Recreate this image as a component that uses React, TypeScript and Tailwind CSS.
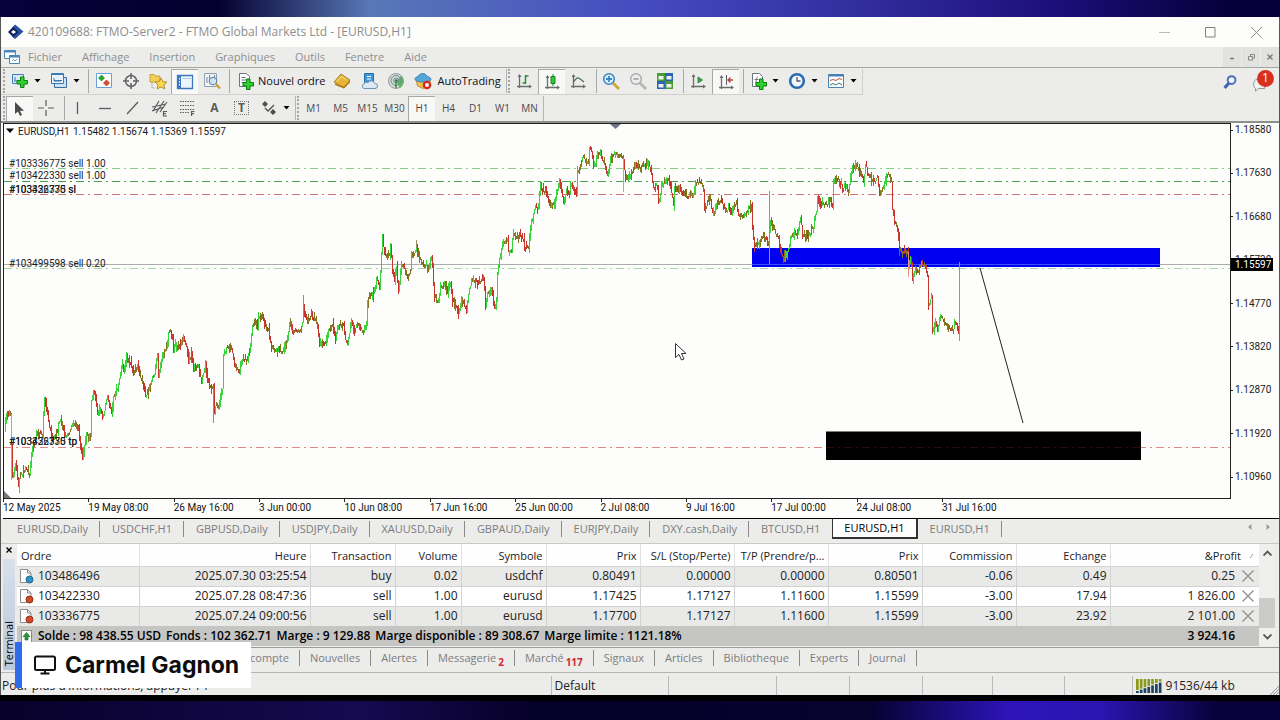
import type { ReactNode } from 'react'
import { clsx } from 'clsx'

interface Order {
  id: string
  time: string
  side: 'buy' | 'sell'
  volume: string
  symbol: string
  open: string
  sl: string
  tp: string
  price: string
  commission: string
  swap: string
  profit: string
}

const orders: Order[] = [
  {
    id: '103486496',
    time: '2025.07.30 03:25:54',
    side: 'buy',
    volume: '0.02',
    symbol: 'usdchf',
    open: '0.80491',
    sl: '0.00000',
    tp: '0.00000',
    price: '0.80501',
    commission: '-0.06',
    swap: '0.49',
    profit: '0.25',
  },
  {
    id: '103422330',
    time: '2025.07.28 08:47:36',
    side: 'sell',
    volume: '1.00',
    symbol: 'eurusd',
    open: '1.17425',
    sl: '1.17127',
    tp: '1.11600',
    price: '1.15599',
    commission: '-3.00',
    swap: '17.94',
    profit: '1 826.00',
  },
  {
    id: '103336775',
    time: '2025.07.24 09:00:56',
    side: 'sell',
    volume: '1.00',
    symbol: 'eurusd',
    open: '1.17700',
    sl: '1.17127',
    tp: '1.11600',
    price: '1.15599',
    commission: '-3.00',
    swap: '23.92',
    profit: '2 101.00',
  },
]

const columns = [
  { label: 'Ordre', width: 'w-[122px]' },
  { label: 'Heure', width: 'w-[171px]' },
  { label: 'Transaction', width: 'w-[85px]' },
  { label: 'Volume', width: 'w-[66px]' },
  { label: 'Symbole', width: 'w-[85px]' },
  { label: 'Prix', width: 'w-[94px]' },
  { label: 'S/L (Stop/Perte)', width: 'w-[94px]' },
  { label: 'T/P (Prendre/p...', width: 'w-[94px]' },
  { label: 'Prix', width: 'w-[94px]' },
  { label: 'Commission', width: 'w-[94px]' },
  { label: 'Echange', width: 'w-[94px]' },
]

const menus = ['Fichier', 'Affichage', 'Insertion', 'Graphiques', 'Outils', 'Fenetre', 'Aide']
const timeframes = ['M1', 'M5', 'M15', 'M30', 'H1', 'H4', 'D1', 'W1', 'MN']

const chartTabs = [
  'EURUSD,Daily',
  'USDCHF,H1',
  'GBPUSD,Daily',
  'USDJPY,Daily',
  'XAUUSD,Daily',
  'GBPAUD,Daily',
  'EURJPY,Daily',
  'DXY.cash,Daily',
  'BTCUSD,H1',
  'EURUSD,H1',
  'EURUSD,H1',
]
const activeTab = 9

const terminalTabs: { label: string; count?: number }[] = [
  { label: 'Nouvelles' },
  { label: 'Alertes' },
  { label: 'Messagerie', count: 2 },
  { label: 'Marché', count: 117 },
  { label: 'Signaux' },
  { label: 'Articles' },
  { label: 'Bibliotheque' },
  { label: 'Experts' },
  { label: 'Journal' },
]

const priceLabels = [
  '1.18580',
  '1.17630',
  '1.16680',
  '1.15730',
  '1.14770',
  '1.13820',
  '1.12870',
  '1.11920',
  '1.10960',
]

const timeLabels = [
  '12 May 2025',
  '19 May 08:00',
  '26 May 16:00',
  '3 Jun 00:00',
  '10 Jun 08:00',
  '17 Jun 16:00',
  '25 Jun 00:00',
  '2 Jul 08:00',
  '9 Jul 16:00',
  '17 Jul 00:00',
  '24 Jul 08:00',
  '31 Jul 16:00',
]

// x,y pairs of the swings in the EURUSD series
const swings = [
  4, 432, 6, 413, 10, 414, 12, 477, 15, 462, 18, 487, 19, 478, 25, 468, 29, 473, 32, 447, 37, 433, 42, 435,
  44, 400, 47, 415, 51, 435, 52, 442, 57, 430, 59, 420, 63, 427, 64, 438, 68, 435, 71, 427, 74, 423, 78, 430,
  80, 447, 82, 457, 83, 452, 86, 432, 88, 438, 90, 435, 91, 400, 93, 390, 95, 398, 97, 412, 100, 410, 102, 417,
  107, 398, 111, 412, 113, 397, 117, 388, 119, 377, 122, 363, 123, 373, 126, 359, 129, 360, 133, 373, 137, 365,
  139, 377, 143, 385, 145, 397, 148, 390, 152, 378, 154, 373, 157, 357, 158, 378, 160, 363, 163, 353, 166, 347,
  168, 332, 170, 332, 173, 347, 177, 345, 181, 343, 183, 337, 186, 347, 188, 362, 191, 353, 193, 370, 198, 365,
  201, 381, 205, 367, 208, 385, 213, 388, 214, 412, 215, 405, 218, 407, 222, 388, 223, 357, 226, 347, 231, 347,
  233, 360, 237, 370, 239, 371, 242, 358, 245, 362, 249, 353, 252, 325, 254, 323, 257, 327, 258, 318, 262, 315,
  265, 327, 268, 330, 271, 347, 275, 352, 278, 348, 282, 353, 286, 342, 289, 325, 293, 330, 298, 332, 302, 325,
  303, 308, 305, 317, 307, 320, 311, 313, 313, 318, 317, 325, 319, 343, 322, 342, 325, 342, 328, 330, 332, 323,
  335, 340, 338, 327, 343, 327, 345, 338, 347, 343, 351, 322, 354, 330, 358, 325, 363, 332, 366, 322, 367, 300,
  370, 297, 373, 293, 376, 280, 379, 285, 381, 257, 382, 238, 384, 253, 386, 258, 389, 252, 390, 245, 392, 270,
  394, 280, 396, 267, 398, 293, 401, 263, 403, 268, 407, 278, 410, 270, 411, 257, 414, 253, 416, 245, 417, 253,
  421, 263, 425, 267, 429, 265, 431, 257, 432, 270, 434, 297, 437, 301, 440, 288, 444, 285, 447, 292, 450, 281,
  452, 300, 454, 302, 458, 312, 461, 302, 466, 310, 468, 293, 471, 282, 475, 280, 479, 283, 483, 276, 485, 306,
  487, 293, 491, 287, 494, 309, 496, 300, 497, 270, 500, 253, 503, 243, 507, 238, 508, 251, 511, 249, 513, 232,
  515, 238, 519, 235, 523, 238, 524, 247, 528, 247, 530, 227, 532, 218, 535, 208, 538, 208, 540, 187, 543, 193,
  545, 187, 549, 205, 552, 203, 553, 206, 556, 193, 559, 181, 563, 201, 566, 190, 569, 192, 571, 184, 576, 192,
  577, 172, 580, 163, 583, 157, 586, 163, 588, 163, 589, 146, 591, 152, 593, 168, 597, 155, 600, 153, 603, 162,
  607, 174, 610, 158, 615, 153, 618, 157, 621, 155, 623, 160, 625, 178, 628, 178, 632, 170, 635, 165, 640, 166,
  647, 164, 650, 168, 653, 187, 657, 187, 658, 204, 661, 187, 665, 180, 668, 178, 671, 192, 673, 204, 674, 190,
  678, 190, 683, 193, 688, 197, 693, 193, 695, 182, 700, 183, 703, 188, 704, 211, 707, 203, 710, 200, 712, 213,
  715, 210, 719, 200, 723, 207, 726, 212, 728, 205, 731, 216, 733, 207, 736, 205, 738, 216, 743, 216, 748, 207,
  751, 208, 752, 227, 754, 246, 758, 243, 763, 235, 768, 243, 770, 222, 773, 230, 778, 237, 780, 253, 783, 259,
  787, 253, 790, 238, 793, 235, 797, 230, 800, 217, 802, 235, 808, 237, 813, 225, 816, 212, 817, 198, 819, 203,
  823, 203, 827, 206, 830, 198, 832, 207, 833, 182, 834, 177, 838, 180, 842, 187, 845, 185, 848, 192, 850, 177,
  852, 168, 855, 165, 858, 167, 863, 182, 865, 165, 868, 175, 873, 182, 877, 177, 879, 194, 883, 187, 886, 177,
  888, 173, 891, 182, 892, 208, 894, 220, 897, 228, 899, 250, 903, 252, 907, 250, 908, 268, 910, 257, 912, 279,
  915, 268, 918, 270, 921, 262, 925, 267, 927, 277, 928, 307, 930, 300, 931, 296, 932, 332, 935, 322, 937, 328,
  940, 315, 944, 320, 947, 328, 952, 330, 956, 322, 958, 333, 959, 338,
]

const noise = (n: number) => {
  const v = Math.sin(n * 127.1 + 11.7) * 43758.5453
  return v - Math.floor(v)
}

// One 1px bar per pixel column, split by colour into three paths
function buildBars() {
  const paths = { up: '', down: '', mixed: '' }
  let s = 0
  let prev = swings[1]
  for (let x = 5; x < 960; x++) {
    while (s + 4 < swings.length && swings[s + 2] < x) s += 2
    const [x0, y0, x1, y1] = swings.slice(s, s + 4)
    const trend = (y1 - y0) / (x1 - x0)
    const close = y0 + trend * (x - x0) + (noise(x) - 0.5) * 4
    const top = Math.round(Math.min(prev, close) - noise(x + 2000) ** 2 * 6)
    const bottom = Math.round(Math.max(prev, close) + noise(x + 4000) ** 2 * 6)
    const d = `M${x + 0.5} ${top}V${Math.max(bottom, top + 3)}`
    const pick = noise(x + 7000)
    if (Math.abs(trend) > 3) paths[trend < 0 ? 'up' : 'down'] += d
    else if (pick < 0.6) paths.mixed += d
    else if (pick < 0.85) paths[trend < 0 ? 'up' : 'down'] += d
    else paths[close < prev ? 'up' : 'down'] += d
    prev = close
  }
  return paths
}

const bars = buildBars()

function Icon({ children, size = 'size-[18px]' }: { children: ReactNode; size?: string }) {
  return (
    <svg viewBox="0 0 18 18" className={clsx(size, 'shrink-0')} fill="none" aria-hidden="true">
      {children}
    </svg>
  )
}

function Tool({ label, pressed, children }: { label: string; pressed?: boolean; children: ReactNode }) {
  return (
    <button
      aria-label={label}
      className={clsx(
        'flex h-[25px] w-[27px] items-center justify-center',
        pressed && 'border-t border-l border-[#a8a8a8] bg-[#f8f8f7]',
      )}
    >
      {children}
    </button>
  )
}

function Caret({ label }: { label: string }) {
  return (
    <button aria-label={label} className="flex h-[25px] w-3 items-center justify-center pr-1">
      <svg viewBox="0 0 7 4" className="h-1 w-[7px] shrink-0" aria-hidden="true">
        <path d="M0.5 0h6L3.5 3.5z" fill="#000" />
      </svg>
    </button>
  )
}

const Separator = () => <span className="mr-px ml-1 h-6 w-px bg-[#a9a9a9]" />
const Handle = () => <span className="mx-px h-6 border-l-2 border-dotted border-[#a5a5a5]" />

const Plus = ({ x = 7, y = 6 }: { x?: number; y?: number }) => (
  <path
    d={`M${x + 3.5} ${y}h3.5v3.5h3.5v3.5h-3.5v3.5h-3.5v-3.5h-3.5v-3.5h3.5z`}
    fill="#2fd02b"
    stroke="#0b7d12"
    strokeWidth="1"
  />
)

const Axes = ({ children }: { children: ReactNode }) => (
  <Icon>
    <path d="M4.500 3v13M2 14.500h13" stroke="#6a6f6c" strokeWidth="1.300" />
    <path d="M2.500 5l2-3 2 3zM14 12.500l3 2-3 2z" fill="#6a6f6c" />
    {children}
  </Icon>
)

const Page = () => <path d="M3.500 1.500h7l3 3v10h-10z" fill="#fff" stroke="#6d7680" />

function TitleBar() {
  return (
    <header className="flex h-[30px] items-center bg-[#fdfdfc] pl-[7px]">
      <svg viewBox="0 0 16 16" className="size-4" aria-hidden="true">
        <path d="M7 0.500l8.500 7L7 15l-3-2.500L9.500 8 4 3.500z" fill="#2a50a4" />
        <path d="M5 3l5.500 5L5 13 0 8z" fill="#0e2359" />
        <path d="M5.500 6l2.500 2-2.500 2L3 8z" fill="#fff" />
      </svg>
      <h1 className="ml-1 text-xs text-[#8e8e8e]">420109688: FTMO-Server2 - FTMO Global Markets Ltd - [EURUSD,H1]</h1>
      <div className="ml-auto flex">
        <button aria-label="Réduire" className="flex h-[30px] w-[46px] items-center justify-center">
          <svg viewBox="0 0 11 11" className="size-[11px]" stroke="#bcbcbc"><path d="M0 5.500h11" /></svg>
        </button>
        <button aria-label="Agrandir" className="flex h-[30px] w-[46px] items-center justify-center">
          <svg viewBox="0 0 11 11" className="size-[11px]" fill="none" stroke="#808080"><path d="M0.500 0.500h9.500v9.500h-9.500z" /></svg>
        </button>
        <button aria-label="Fermer" className="flex h-[30px] w-[46px] items-center justify-center">
          <svg viewBox="0 0 11 11" className="size-[11px]" stroke="#8c8c8c"><path d="M0 0l11 11M11 0L0 11" /></svg>
        </button>
      </div>
    </header>
  )
}

function MenuBar() {
  return (
    <nav className="flex h-[21px] items-center border-b border-[#a4a6a4] pl-[3px]">
      <svg viewBox="0 0 16 16" className="size-4" fill="#fff" stroke="#4a86b8" aria-hidden="true">
        <path d="M0.500 1.500h11v8h-11z" />
        <path d="M0.500 2.500h11" strokeWidth="2" />
        <path d="M5.500 6.500h10v8h-10z" />
        <path d="M5.500 7.500h10" strokeWidth="2" />
        <path d="M8 12l1.500-1.500 1.500 1.500 2-2" fill="none" strokeWidth="0.800" />
      </svg>
      <div className="ml-2 flex gap-5">
        {menus.map((m) => (
          <button key={m} className="text-[11px] text-[#8e8e8e]">{m}</button>
        ))}
      </div>
      <div className="ml-auto flex gap-px">
        <button aria-label="Réduire le graphique" className="flex h-5 w-[18px] items-center justify-center bg-[#e2e2e1]">
          <svg viewBox="0 0 6 6" className="size-[6px]" stroke="#777"><path d="M1 4.500h4" strokeWidth="1.500" /></svg>
        </button>
        <button aria-label="Restaurer le graphique" className="flex h-5 w-[18px] items-center justify-center bg-[#e2e2e1]">
          <svg viewBox="0 0 7 7" className="size-[7px]" fill="none" stroke="#888"><path d="M2.500 2V0.500h4v3.500H5M0.500 2.500h4v3.500h-4z" /></svg>
        </button>
        <button aria-label="Fermer le graphique" className="flex h-5 w-[18px] items-center justify-center bg-[#e2e2e1]">
          <svg viewBox="0 0 6 6" className="size-[6px]" stroke="#777"><path d="M0.500 0.500l5 5M5.500 0.500l-5 5" strokeWidth="1.300" /></svg>
        </button>
      </div>
    </nav>
  )
}

function StandardToolbar() {
  return (
    <div className="flex h-[27px] items-center">
      <div className="flex items-center border-r border-b border-[#cfcfce] pl-px">
        <Handle />
        <Tool label="Nouveau graphique">
          <Icon>
            <path d="M1.500 2.500h11v9h-11z" fill="#dcebf7" stroke="#3f7fb5" />
            <path d="M4 5v4M3 9h6" stroke="#3f7fb5" />
            <Plus x={6} y={5} />
          </Icon>
        </Tool>
        <Caret label="Liste des graphiques" />
        <Tool label="Profils">
          <Icon>
            <path d="M4.500 5.500h12v10h-12z" fill="#cfe1f1" stroke="#3a6fa3" />
            <path d="M1.500 1.500h12v10h-12z" fill="#e9f2fa" stroke="#3a7ab5" />
            <path d="M1.500 2.500h12M4 6v3h7M4 8.500h8" stroke="#3a7ab5" />
          </Icon>
        </Tool>
        <Caret label="Liste des profils" />
        <Separator />
        <Tool label="Fenêtre du marché">
          <Icon>
            <path d="M1.500 1.500h15v14h-15z" fill="#fff" stroke="#6aa0d8" />
            <path d="M6.500 3l3 3-3 3-3-3z" fill="#2aa82a" stroke="#157a1a" strokeWidth="0.600" />
            <path d="M11.500 8l3 3-3 3-3-3z" fill="#e04a2c" stroke="#a82a14" strokeWidth="0.600" />
          </Icon>
        </Tool>
        <Tool label="Fenêtre des données">
          <Icon>
            <circle cx="9" cy="9" r="5.500" stroke="#5f6363" strokeWidth="1.500" />
            <path d="M9 1v6M9 11v6M1 9h6M11 9h6" stroke="#5f6363" strokeWidth="1.500" />
          </Icon>
        </Tool>
        <Tool label="Navigateur">
          <Icon>
            <path d="M1 2.500h4l1 1.500h5v6H1z" fill="#f4cf55" stroke="#b9922a" strokeWidth="0.800" />
            <path d="M3 11v5h3" stroke="#8a8a8a" strokeDasharray="1 1" />
            <path d="M12 6l1.900 3.600 4 .5-3 2.800.8 4L12 15l-3.700 1.900.8-4-3-2.800 4-.5z" fill="#fbd84a" stroke="#a67a1c" strokeWidth="0.800" />
          </Icon>
        </Tool>
        <Tool label="Terminal" pressed>
          <Icon>
            <path d="M1.500 2.500h15v13h-15z" fill="#eef4fb" stroke="#3c78bd" strokeWidth="1.300" />
            <path d="M2 3h3v12H2z" fill="#3c78bd" />
            <path d="M3.500 5v9" stroke="#fff" strokeDasharray="1.500 1.500" />
            <path d="M7 5.500h8" stroke="#b4cbe6" />
          </Icon>
        </Tool>
        <Tool label="Testeur de stratégie">
          <Icon>
            <path d="M1.500 1.500h12v13h-12z" fill="#edf1f4" stroke="#93a0ab" />
            <path d="M4 5v6M6.500 3v8M9 5v7M11.500 3v5" stroke="#7393af" />
            <circle cx="10" cy="9" r="3.800" fill="#cfe6f7" fillOpacity="0.800" stroke="#5e7f99" />
            <path d="M13 12l4 4.500" stroke="#d0a02e" strokeWidth="2.200" />
          </Icon>
        </Tool>
        <Separator />
        <button className="flex h-[25px] items-center pr-[3px] text-[11px] text-[#111]">
          <span className="flex w-[27px] justify-center">
            <Icon>
              <Page />
              <path d="M5.500 5.500h4M5.500 8h6M5.500 10.500h4" stroke="#6d7680" />
              <Plus x={7} y={7} />
            </Icon>
          </span>
          Nouvel ordre
        </button>
        <Tool label="MetaEditor">
          <Icon>
            <path d="M1 10l7-8 9 6-6 8z" fill="#e7b438" stroke="#9a6c12" strokeWidth="0.800" />
            <path d="M2 11.500l9 3 6-6v2l-6 6-9-3.500z" fill="#b27c1a" />
            <path d="M4 9.500l4.500-5 5 3.500" stroke="#fae59a" />
          </Icon>
        </Tool>
        <Tool label="Hébergement virtuel">
          <Icon>
            <path d="M4.500 1.500h9v9h-9z" fill="#3f97dd" stroke="#2a6ea8" />
            <path d="M7 4.500h4M7 7h4" stroke="#fff" />
            <path d="M4 16.500h11a2.500 2.500 0 0 0 0-5 4 4 0 0 0-7-1 3 3 0 0 0-4 1.500 2.300 2.300 0 0 0 0 4.500z" fill="#dce9f4" stroke="#6f93b2" />
          </Icon>
        </Tool>
        <Tool label="Signaux">
          <Icon>
            <circle cx="9" cy="9" r="7.500" fill="#d4dcda" stroke="#8f9a99" />
            <path d="M9 9l4 7a8 8 0 0 0 1-12z" fill="#5cb85a" />
            <circle cx="9" cy="8.500" r="5" stroke="#6f8c94" />
            <circle cx="9" cy="8.500" r="2.500" stroke="#6f8c94" />
            <circle cx="9" cy="8.500" r="1.200" fill="#3b6e62" />
            <path d="M9 9v7" stroke="#3f8e45" strokeWidth="1.500" />
          </Icon>
        </Tool>
        <button className="flex h-[25px] items-center pr-1 text-[11px] text-[#111]">
          <span className="flex w-7 justify-center">
            <Icon>
              <path d="M2 8l1.500 6L9 16.500l6-2.500 1.500-6z" fill="#eec04a" stroke="#b1862a" strokeWidth="0.800" />
              <path d="M1 7c0-2 3-2 4-4 2-2 6-2 7 0s5 2 5 4-4 3-8 3-8-1-8-3z" fill="#55a5d8" stroke="#2d7bb0" strokeWidth="0.800" />
              <circle cx="13" cy="13" r="4.300" fill="#d42a1e" />
              <path d="M11.300 11.300h3.400v3.400h-3.400z" fill="#fff" />
            </Icon>
          </span>
          AutoTrading
        </button>
        <span className="ml-px h-6 border-l border-[#b5b5b5]" />
        <Handle />
        <Tool label="Graphique en barres">
          <Axes>
            <path d="M10.500 3v9M10.500 4h3M7.500 11h3" stroke="#2f8c37" strokeWidth="1.500" />
          </Axes>
        </Tool>
        <Tool label="Chandeliers" pressed>
          <Axes>
            <path d="M10 1v12" stroke="#15851e" />
            <path d="M8 3.500h4v7H8z" fill="#33c93a" stroke="#15851e" />
          </Axes>
        </Tool>
        <Tool label="Graphique linéaire">
          <Axes>
            <path d="M4 10l4-4c2-1 3 1 7 4" stroke="#4f6f55" strokeWidth="1.300" />
          </Axes>
        </Tool>
        <Separator />
        <Tool label="Zoom avant">
          <Icon>
            <path d="M11 11l6 6" stroke="#d3a636" strokeWidth="2.800" />
            <circle cx="7" cy="7" r="5.300" fill="#e0f0fb" stroke="#3a87c8" strokeWidth="1.600" />
            <path d="M7 4v6M4 7h6" stroke="#3a87c8" strokeWidth="1.800" />
          </Icon>
        </Tool>
        <Tool label="Zoom arrière">
          <Icon>
            <path d="M11 11l6 6" stroke="#b5b5b5" strokeWidth="2.800" />
            <circle cx="7" cy="7" r="5.300" fill="#ededed" stroke="#aaa" strokeWidth="1.400" />
            <path d="M4.500 7h5" stroke="#999" strokeWidth="1.500" />
          </Icon>
        </Tool>
        <Tool label="Mosaïque">
          <Icon>
            <path d="M1 1h8v8H1zM9 9h8v8H9z" fill="#4a9e2f" />
            <path d="M9 1h8v8H9zM1 9h8v8H1z" fill="#2f62b5" />
            <path d="M2.500 4h5v3.500h-5zM10.500 4h5v3.500h-5zM2.500 12h5v3.500h-5zM10.500 12h5v3.500h-5z" fill="#eaf3ea" />
          </Icon>
        </Tool>
        <Separator />
        <Tool label="Défilement automatique">
          <Axes>
            <path d="M9 5l4.500 3L9 11z" fill="#3ca845" stroke="#257a2d" strokeWidth="0.800" />
          </Axes>
        </Tool>
        <Tool label="Décalage du graphique" pressed>
          <Axes>
            <path d="M9.500 2v10" stroke="#5a5f5c" />
            <path d="M16 7h-5M13.500 4.500L11 7l2.500 2.500" stroke="#b2433a" strokeWidth="1.400" />
          </Axes>
        </Tool>
        <Separator />
        <Tool label="Indicateurs">
          <Icon>
            <Page />
            <path d="M6 11c1.500 0 1-6 3-6M5.500 7.500h4" stroke="#6d7680" />
            <Plus x={7} y={7} />
          </Icon>
        </Tool>
        <Caret label="Liste des indicateurs" />
        <Tool label="Périodes">
          <Icon>
            <circle cx="9" cy="9" r="6.800" fill="#f3f8fc" stroke="#2b6cb0" strokeWidth="2.600" />
            <path d="M9 5v4h3.500" stroke="#555" strokeWidth="1.300" />
          </Icon>
        </Tool>
        <Caret label="Liste des périodes" />
        <Tool label="Modèles">
          <Icon>
            <path d="M1.500 2.500h15v13h-15z" fill="#fbfcfd" stroke="#4a80b5" />
            <path d="M1.500 3.500h15" stroke="#4a80b5" strokeWidth="2" />
            <path d="M3 8.500l3-1 3 1 3-2 3 1" stroke="#c0503f" />
            <path d="M3 13l3-1.500 3 1.500 3-2 3 2" stroke="#3b7f75" />
          </Icon>
        </Tool>
        <Caret label="Liste des modèles" />
      </div>
      <div className="ml-auto flex items-center gap-[10px] pr-[5px]">
        <button aria-label="Rechercher" className="flex size-5 items-center justify-center">
          <Icon size="size-[14px]">
            <path d="M8 10l-6 6.500" stroke="#3d62b0" strokeWidth="4" />
            <circle cx="11" cy="6.500" r="5" fill="#f0f4fb" stroke="#4a6fb5" strokeWidth="2.500" />
          </Icon>
        </button>
        <button aria-label="Notifications" className="relative h-6 w-6">
          <svg viewBox="0 0 26 24" className="size-6" fill="none" aria-hidden="true">
            <path d="M4 13c0-3 3-4 6-4h6v10H9l-3 3v-3c-2-1-2-4-2-6z" fill="#f2f2f2" stroke="#8a8a8a" />
          </svg>
          <span className="absolute top-0 right-0 flex size-[17px] items-center justify-center rounded-full bg-[#d8321f] text-xs text-white">
            1
          </span>
        </button>
      </div>
    </div>
  )
}

function LineToolbar() {
  return (
    <div className="flex h-[26px] items-center">
      <div className="flex items-center border-r border-[#b5b5b5] pl-px">
        <Handle />
        <Tool label="Curseur" pressed>
          <Icon>
            <path d="M4 2v12l3-2.500 2 4.500 2-1-2-4.300h4z" fill="#4b4b4b" />
          </Icon>
        </Tool>
        <Tool label="Réticule">
          <Icon>
            <path d="M8 1v6M8 11v6M0 9h6M10 9h6" stroke="#5c5c5c" strokeWidth="1.200" />
          </Icon>
        </Tool>
        <Separator />
        <Tool label="Ligne verticale">
          <Icon><path d="M6.500 3v12" stroke="#5c5c5c" strokeWidth="1.300" /></Icon>
        </Tool>
        <Tool label="Ligne horizontale">
          <Icon><path d="M1 9.500h12" stroke="#5c5c5c" strokeWidth="1.300" /></Icon>
        </Tool>
        <Tool label="Ligne de tendance">
          <Icon><path d="M2 15L13 3" stroke="#5c5c5c" strokeWidth="1.300" /></Icon>
        </Tool>
        <Tool label="Canal équidistant">
          <Icon>
            <path d="M1 12L7 2M4 14l8-12M8 13l7-10M0 8l14-3M0 12l12-4" stroke="#5c5c5c" strokeWidth="1.200" />
            <path d="M15 12.500h-3.500v4.500H15M11.500 14.700H14" stroke="#5c5c5c" strokeWidth="1.200" />
          </Icon>
        </Tool>
        <Tool label="Fibonacci">
          <Icon>
            <path d="M1 2.500h14M1 6.500h14M1 10.500h14M1 13.500h9" stroke="#5c5c5c" strokeDasharray="1.500 1" />
            <path d="M15.500 12.500H12.500V17M12.500 14.700H15" stroke="#5c5c5c" strokeWidth="1.200" />
          </Icon>
        </Tool>
        <Tool label="Texte">
          <span className="text-xs font-bold text-[#5c5c5c]">A</span>
        </Tool>
        <Tool label="Étiquette de texte">
          <span className="border border-dotted border-[#777] px-[3px] text-xs leading-3 font-bold text-[#5c5c5c]">T</span>
        </Tool>
        <Tool label="Flèches">
          <Icon>
            <path d="M5 2l3 3-3 3-3-3zM13 10l3 3-3 3-3-3z" fill="#4f4f4f" />
            <path d="M5 9l3 3 6-6" stroke="#4f4f4f" strokeWidth="1.300" />
          </Icon>
        </Tool>
        <Caret label="Liste des flèches" />
        <span className="ml-px h-6 border-l border-[#b5b5b5]" />
        <Handle />
        {timeframes.map((tf) => (
          <button
            key={tf}
            className={clsx(
              'flex h-[25px] w-[27px] items-center justify-center text-[10px] text-[#4a4a4a]',
              tf === 'H1' && 'border-t border-l border-[#a8a8a8] bg-[#f8f8f7]',
            )}
          >
            {tf}
          </button>
        ))}
      </div>
    </div>
  )
}

const levels = [
  { y: 168.5, color: '#86cd86' },
  { y: 181.5, color: '#46a04e' },
  { y: 194.5, color: '#d07474' },
  { y: 268.5, color: '#a3d8a3' },
  { y: 447.5, color: '#e08888' },
]

function Chart() {
  return (
    <section aria-label="EURUSD,H1" className="border-t-2 border-[#8d8f8d] bg-[#fdfdfc] pl-[2px]">
      <div className="flex">
        <div className="min-w-0 flex-1 border border-[#222]">
          <svg viewBox="4 124 1226 374" className="block h-auto w-full font-['Roboto',sans-serif] text-[10px]" fill="none">
            <path d="M610 124h11l-5.500 5z" fill="#6f7486" />
            <path d="M4 491v7h7z" fill="#777" />
            <path d="M752 248h408v19H752z" fill="#0000f0" />
            {levels.map((l) => (
              <path key={l.y} d={`M4 ${l.y}h1226`} stroke={l.color} strokeDasharray="8 4 2 4" />
            ))}
            <path d="M4 264.500h1226" stroke="#a9b0ac" />
            <path d="M752 264.500h408" stroke="#3d4cf5" />
            <g shapeRendering="crispEdges">
              <path d={bars.mixed} stroke="#85751f" />
              <path d={bars.down} stroke="#c8352a" />
              <path d={bars.up} stroke="#38d43c" />
              <path d="M11.500 414V480M623.500 158v34M908.500 252v25" stroke="#ef8f80" />
              <path d="M213.500 388v35M303.500 295v22M416.500 240v8" stroke="#9a8f60" />
              <path d="M769.500 191v73M959.500 262v79" stroke="#38d43c" />
            </g>
            <path d="M826 431.500h315V460H826z" fill="#000" />
            <path d="M826 447.500h315" stroke="#2a0c0c" strokeDasharray="8 4 2 4" />
            <path d="M980 268l43 155" stroke="#222" />
            <path d="M6 128.500h8l-4 4.500z" fill="#000" />
            <g fill="#1c1c1c">
              <text x="18" y="135">EURUSD,H1</text>
              <text x="73" y="135">1.15482 1.15674 1.15369 1.15597</text>
              <text x="9" y="167">#103336775 sell 1.00</text>
              <text x="9" y="179">#103422330 sell 1.00</text>
              <text x="9" y="193">#103336775 sl</text>
              <text x="9" y="193">#103422330 sl</text>
              <text x="9" y="267">#103499598 sell 0.20</text>
              <text x="9" y="445">#103336775 tp</text>
              <text x="9" y="445">#103422330 tp</text>
            </g>
            <path d="M675.500 343.500v14l3.500-3 2.500 5.500 2.500-1-2.500-5.500h4.500z" fill="#fff" stroke="#333" />
          </svg>
        </div>
        <div className="relative flex w-12 flex-col justify-between pt-[2px] pb-[17px] font-['Roboto',sans-serif] text-[10px] leading-[10px] text-[#222]">
          {priceLabels.map((p) => (
            <span key={p} className="flex items-center gap-[2px]">
              <span className="h-px w-[2px] bg-[#222]" />
              {p}
            </span>
          ))}
          <span className="absolute top-[36%] left-0 w-[42px] bg-black pt-px pl-1 leading-3 text-white">1.15597</span>
        </div>
      </div>
      <div className="flex h-5 overflow-hidden border-b border-black font-['Roboto',sans-serif] text-[10px] text-[#111]">
        {timeLabels.map((t) => (
          <span key={t} className="w-[6.69%] shrink-0 leading-3 whitespace-nowrap">
            <span className="block h-[3px] w-px bg-[#222]" />
            {t}
          </span>
        ))}
      </div>
    </section>
  )
}

function ChartTabs() {
  return (
    <div className="flex h-[25px] items-start gap-px border-b border-[#c9c9c8] pl-[5px] text-[11px] text-[#7b7b7b]">
      {chartTabs.map((t, i) => (
        <button
          key={i}
          className={clsx(
            'px-[11px] leading-4',
            i === activeTab
              ? 'h-5 border-r-2 border-b-2 border-l border-[#333] bg-white text-black'
              : clsx('mt-[2px] h-4', i !== activeTab - 1 && 'border-r border-[#8a8a8a]'),
          )}
        >
          {t}
        </button>
      ))}
      <div className="mt-1 ml-auto flex gap-[14px] pr-2">
        <button aria-label="Onglets précédents">
          <svg viewBox="0 0 5 8" className="h-2 w-[5px]"><path d="M4.500 1v6L1 4z" fill="#999" /></svg>
        </button>
        <button aria-label="Onglets suivants">
          <svg viewBox="0 0 5 8" className="h-2 w-[5px]"><path d="M0.500 1v6L4 4z" fill="#999" /></svg>
        </button>
      </div>
    </div>
  )
}

function OrderIcon({ side }: { side: Order['side'] }) {
  return (
    <svg viewBox="0 0 15 16" className="h-4 w-[15px] shrink-0" fill="none" aria-hidden="true">
      <path d="M1.500 1.500h7l3.500 3.500v9.500H1.500z" fill="#fff" stroke="#8b8b8b" />
      <path d="M8.500 1.500V5H12" stroke="#8b8b8b" />
      <circle cx="10.500" cy="11.500" r="3.500" fill={side === 'buy' ? '#2f8fc4' : '#cf4a26'} stroke={side === 'buy' ? '#1c6b98' : '#963012'} />
    </svg>
  )
}

function OrdersTable() {
  return (
    <table className="w-full table-fixed border-collapse text-xs text-[#222]">
      <colgroup>
        {columns.map((c, i) => (
          <col key={i} className={c.width} />
        ))}
        <col />
      </colgroup>
      <thead>
        <tr className="h-[22px] bg-[#fefefe] text-[11px]">
          {columns.map((c, i) => (
            <th
              key={i}
              className={clsx(
                'border-r border-[#e2e2e2] p-0 pt-[2px] leading-4 font-normal whitespace-nowrap',
                i === 0 ? 'pl-1 text-left' : 'pr-[3px] text-right',
              )}
            >
              {c.label}
            </th>
          ))}
          <th className="p-0 pt-[2px] leading-4 font-normal">
            <span className="flex items-center justify-end gap-2 pr-[5px]">
              &amp;Profit
              <svg viewBox="0 0 5 6" className="h-[6px] w-[5px]" stroke="#999"><path d="M1 5l3-4" /></svg>
            </span>
          </th>
        </tr>
      </thead>
      <tbody>
        {orders.map((o) => (
          <tr key={o.id} className="h-5 border-t border-[#d2d2d2] odd:bg-[#e9e9e8] even:bg-white">
            <td className="border-r border-[#d2d2d2] p-0 pl-[2px] leading-4">
              <span className="flex items-center gap-1">
                <OrderIcon side={o.side} />
                {o.id}
              </span>
            </td>
            {[o.time, o.side, o.volume, o.symbol, o.open, o.sl, o.tp, o.price, o.commission, o.swap].map((v, i) => (
              <td key={i} className="border-r border-[#d2d2d2] p-0 pr-[3px] text-right leading-4 whitespace-nowrap">
                {v}
              </td>
            ))}
            <td className="p-0 leading-4">
              <span className="flex items-center justify-end gap-[7px] pr-[5px]">
                {o.profit}
                <button aria-label={`Fermer ${o.id}`}>
                  <svg viewBox="0 0 12 12" className="size-3" stroke="#8f8f8f" strokeWidth="1.300"><path d="M0.500 0.500l11 11M11.500 0.500l-11 11" /></svg>
                </button>
              </span>
            </td>
          </tr>
        ))}
      </tbody>
      <tfoot>
        <tr className="h-5 bg-[#c5c5c4] font-semibold text-black">
          <td colSpan={11} className="p-0 pl-1 leading-4 whitespace-nowrap">
            <span className="flex items-center gap-[6px]">
              <svg viewBox="0 0 11 13" className="h-[13px] w-[11px]" aria-hidden="true">
                <path d="M0.500 0.500h10v12H0.500z" fill="#fff" stroke="#888" />
                <path d="M5.500 2.500L9 6.500H7v3.500H4V6.500H2z" fill="#2f9a35" stroke="#16651d" strokeWidth="0.600" />
              </svg>
              <span className="flex gap-[5px]">
                <span>Solde : 98 438.55 USD</span>
                <span>Fonds : 102 362.71</span>
                <span>Marge : 9 129.88</span>
                <span>Marge disponible : 89 308.67</span>
                <span>Marge limite : 1121.18%</span>
              </span>
            </span>
          </td>
          <td className="p-0 pr-6 text-right leading-4">3 924.16</td>
        </tr>
      </tfoot>
    </table>
  )
}

function Terminal() {
  return (
    <section aria-label="Terminal" className="flex">
      <div className="flex w-4 flex-col items-center">
        <button aria-label="Fermer le terminal" className="flex h-3 items-center">
          <svg viewBox="0 0 6 6" className="size-[6px]" stroke="#000" strokeWidth="1.400"><path d="M0.500 0.500l5 5M5.500 0.500l-5 5" /></svg>
        </button>
        <div className="mt-[3px] mb-[2px] flex w-3 flex-1 items-center bg-linear-to-b from-[#d8e0ea] to-[#b9c9de] text-[11px] text-black">
          <span className="rotate-180 self-end pt-1 leading-3 [writing-mode:vertical-rl]">Terminal</span>
        </div>
      </div>
      <div className="min-w-0 flex-1">
        <div className="flex border-b border-[#9b9b9b] pr-1 pb-px">
          <div className="min-w-0 flex-1">
            <OrdersTable />
          </div>
          <div className="flex w-4 flex-col items-center bg-[#efefee] py-[6px]">
            <svg viewBox="0 0 9 6" className="h-[6px] w-[9px]" fill="none" stroke="#555" strokeWidth="1.800"><path d="M0.500 5.500l4-4 4 4" /></svg>
            <span className="mt-auto mb-[6px] h-[30px] w-4 bg-[#cbcbca]" />
            <svg viewBox="0 0 9 6" className="h-[6px] w-[9px]" fill="none" stroke="#555" strokeWidth="1.800"><path d="M0.500 0.500l4 4 4-4" /></svg>
          </div>
        </div>
        <div className="flex h-6 items-start pt-[2px] pl-[233px] text-[11px] text-[#7d7d7d]">
          <button className="h-4 border-r border-[#8a8a8a] pr-[10px] leading-4">compte</button>
          {terminalTabs.map((t) => (
            <button key={t.label} className="flex h-4 border-r border-[#8a8a8a] px-[10px] leading-4">
              {t.label}
              {t.count && <span className="mt-1 ml-[2px] text-[10px] leading-4 font-bold text-[#cf2a30]">{t.count}</span>}
            </button>
          ))}
        </div>
      </div>
    </section>
  )
}

function StatusBar() {
  return (
    <footer className="flex h-[23px] items-stretch border-t border-[#b5b5b5] pt-[3px] text-xs text-[#222]">
      <span className="w-[43%] pl-px leading-5 whitespace-nowrap">Pour plus d'informations, appuyer F1</span>
      <span className="w-[117px] border-l border-[#b9b9b9] pl-[3px] leading-5">Default</span>
      <span className="w-[108px] border-l border-[#b9b9b9]" />
      <span className="w-[73px] border-l border-[#b9b9b9]" />
      <span className="w-[73px] border-l border-[#b9b9b9]" />
      <span className="w-[70px] border-l border-[#b9b9b9]" />
      <span className="w-[72px] border-l border-[#b9b9b9]" />
      <span className="w-[68px] border-l border-[#b9b9b9]" />
      <span className="flex flex-1 items-center gap-1 border-l border-[#b9b9b9] pl-[3px] whitespace-nowrap">
        <svg viewBox="0 0 26 14" className="h-[14px] w-[26px]" aria-hidden="true">
          {[0, 1, 2, 3, 4, 5, 6].map((i) => (
            <g key={i}>
              <path d={`M${i * 3.8} 0h2.700v${11 - i * 1.4}h-2.700z`} fill="#8a9a1d" />
              <path d={`M${i * 3.8} ${12 - i * 1.4}h2.700V14h-2.700z`} fill="#1c4460" />
            </g>
          ))}
        </svg>
        91536/44 kb
      </span>
      <svg viewBox="0 0 9 9" className="mt-auto size-[9px]" stroke="#999"><path d="M0 9l9-9M3 9l6-6M6 9l3-3" /></svg>
    </footer>
  )
}

function SharerBadge() {
  return (
    <div className="absolute bottom-8 left-[15px] flex h-[46px] items-center gap-[9px] border-l-[7px] border-[#2f6bea] bg-white pr-3 pl-[12px]">
      <svg viewBox="0 0 22 20" className="h-5 w-[22px]" fill="none" stroke="#111" strokeWidth="2" aria-hidden="true">
        <rect x="1" y="1.500" width="20" height="13.500" rx="1.500" />
        <path d="M11 15v3M6.500 18.500h9" />
      </svg>
      <span className="font-['Inter',sans-serif] text-[23px] font-bold text-[#0d0d0d]">Carmel Gagnon</span>
    </div>
  )
}

export default function App() {
  return (
    <div className="relative flex min-h-screen flex-col bg-black font-['Open_Sans',sans-serif]">
      <div className="h-[17px] bg-[linear-gradient(90deg,#07003a_0%,#04002e_17%,#5878b8_29%,#454bc0_50%,#302c9c_68%,#1c0d78_83%,#05003a_96%)]" />
      <main className="border-r border-l border-[#555] bg-[#ececeb]">
        <TitleBar />
        <MenuBar />
        <StandardToolbar />
        <LineToolbar />
        <Chart />
        <ChartTabs />
        <Terminal />
        <StatusBar />
      </main>
      <div className="mt-[6px] flex-1 bg-[linear-gradient(90deg,#07012a_0%,#150a50_28%,#050028_42%,#07022f_68%,#2e14bb_79%,#2a15b0_86%,#08023a_95%)]" />
      <SharerBadge />
    </div>
  )
}
